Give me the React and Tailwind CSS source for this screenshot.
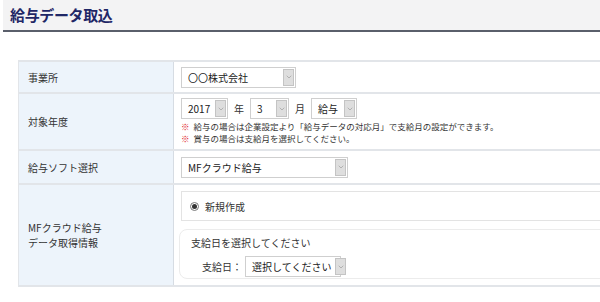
import { ChevronDown } from 'lucide-react'

function Select({ value, className = '' }) {
  return (
    <div className={`flex items-stretch h-[21px] border border-[#cfcfcf] bg-white ${className}`}>
      <span className="flex-1 flex items-center pl-[6px] pr-1 text-[10px] text-[#222] whitespace-nowrap">{value}</span>
      <span className="w-[11px] shrink-0 my-[1px] mr-[1px] flex items-center justify-center bg-[#dedede] border border-[#c4c4c4]">
        <ChevronDown size={8} strokeWidth={2} className="text-[#9a9a9a]" />
      </span>
    </div>
  )
}

function Row({ label, children, className = '' }) {
  return (
    <div className={`flex border-b-2 border-[#e2e5e9] ${className}`}>
      <div className="w-[155px] shrink-0 bg-[#edf4fb] border-r border-[#d6dce3] pl-[9px] flex items-center text-[10px] text-[#333] leading-[15px]">
        {label}
      </div>
      <div className="flex-1 pl-[7px]">{children}</div>
    </div>
  )
}

export default function App() {
  return (
    <div
      className="w-[600px] h-[302px] overflow-hidden bg-white"
      style={{ fontFamily: '"Noto Sans CJK JP", "Noto Sans", sans-serif' }}
    >
      {/* Title */}
      <div className="ml-[3px] h-[32px] bg-[#f3f3f4] border-b-2 border-[#5a5f6b] flex items-center pl-[7px]">
        <h1 className="text-[15px] font-bold text-[#1f2766] tracking-tight">給与データ取込</h1>
      </div>

      {/* Form table */}
      <div className="ml-[18px] mt-[28px] w-[640px] border-t-2 border-l border-[#e2e5e9]">
        <Row label="事業所" className="h-[32px]">
          <div className="h-full flex items-center">
            <Select value="〇〇株式会社" className="w-[115px]" />
          </div>
        </Row>

        <Row label="対象年度" className="h-[57px]">
          <div className="pt-[4px]">
            <div className="flex items-center gap-[6px] text-[10px] text-[#333]">
              <Select value="2017" className="w-[47px]" />
              <span>年</span>
              <Select value="3" className="w-[39px]" />
              <span>月</span>
              <Select value="給与" className="w-[46px]" />
            </div>
            <div className="mt-[1px] text-[8.5px] leading-[12px] text-[#333]">
              <p className="h-[12px]"><span className="text-[#e0242b] mr-[4px]">※</span>給与の場合は企業設定より「給与データの対応月」で支給月の設定ができます。</p>
              <p className="h-[12px]"><span className="text-[#e0242b] mr-[4px]">※</span>賞与の場合は支給月を選択してください。</p>
            </div>
          </div>
        </Row>

        <Row label="給与ソフト選択" className="h-[34px]">
          <div className="h-full flex items-center">
            <Select value="MFクラウド給与" className="w-[167px]" />
          </div>
        </Row>

        <Row label={<span>MFクラウド給与<br />データ取得情報</span>} className="h-[102px]">
          <div className="pt-[6px] flex flex-col gap-[8px]">
            <div className="h-[30px] border border-[#e3e3e3] flex items-center pl-[8px] gap-[6px] text-[10px] text-[#333]">
              <span className="w-[9px] h-[9px] rounded-full border border-[#777] flex items-center justify-center">
                <span className="w-[5px] h-[5px] rounded-full bg-[#333]" />
              </span>
              新規作成
            </div>
            <div className="-ml-[2px] h-[50px] border border-[#ececec] rounded-[8px] pl-[11px] pt-[5px] text-[10px] text-[#333]">
              <p>支給日を選択してください</p>
              <div className="mt-[6px] pl-[11px] flex items-center gap-[3px]">
                <span>支給日：</span>
                <Select value="選択してください" className="w-[96px]" />
              </div>
            </div>
          </div>
        </Row>
      </div>
    </div>
  )
}
